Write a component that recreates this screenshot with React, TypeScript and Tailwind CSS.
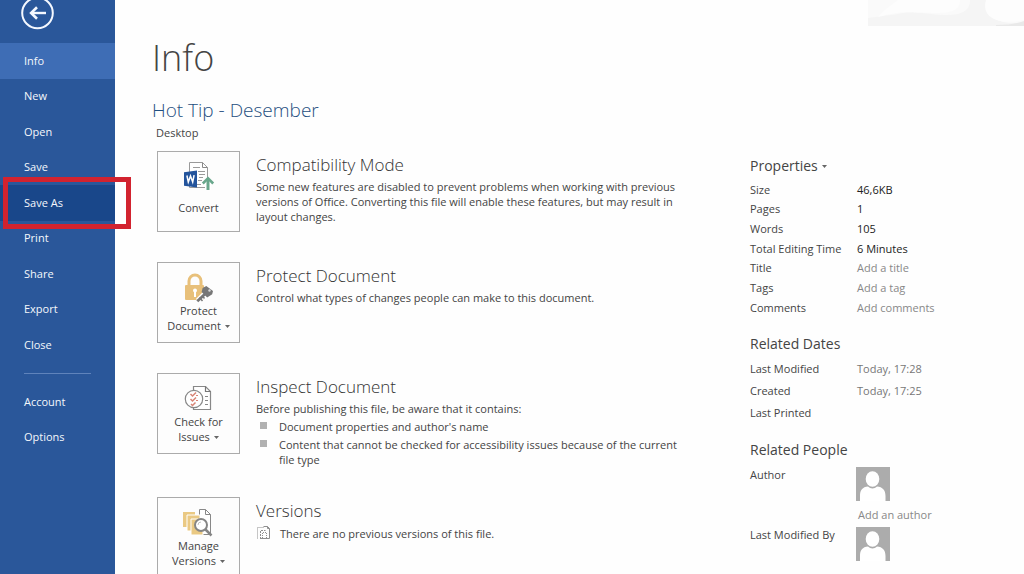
import type { ReactNode } from "react";

const primaryNav = ["Info", "New", "Open", "Save", "Save As", "Print", "Share", "Export", "Close"];
const secondaryNav = ["Account", "Options"];

const properties = [
  { label: "Size", value: "46,6KB", editable: false },
  { label: "Pages", value: "1", editable: false },
  { label: "Words", value: "105", editable: false },
  { label: "Total Editing Time", value: "6 Minutes", editable: false },
  { label: "Title", value: "Add a title", editable: true },
  { label: "Tags", value: "Add a tag", editable: true },
  { label: "Comments", value: "Add comments", editable: true },
];

const dates = [
  { label: "Last Modified", value: "Today, 17:28" },
  { label: "Created", value: "Today, 17:25" },
  { label: "Last Printed", value: "" },
];

function BackIcon() {
  return (
    <svg width="34" height="34" viewBox="0 0 34 34" fill="none" stroke="#f4f8ff" aria-hidden="true">
      <circle cx="17.5" cy="17" r="15.3" strokeWidth="2" />
      <path d="M26 17H11.5" strokeWidth="2.4" />
      <path d="M17 11.2 11.1 17l5.9 5.8" strokeWidth="2.6" />
    </svg>
  );
}

function ConvertIcon() {
  return (
    <svg width="32" height="32" viewBox="0 0 32 32" fill="none" aria-hidden="true">
      <path d="M6.5 2.5h13l5 5v20h-18z" fill="#fff" stroke="#9a9a9a" />
      <path d="M19.5 2.5v5h5" stroke="#888" />
      <path d="M10 7.5h7M15 11.5h7M16 14.5h6M16 17.5h4M15 20.5h4M9 24.5h9" stroke="#9a9a9a" />
      <path d="M1 12.2 14 10.5v17L1 25.8z" fill="#23549c" />
      <path d="m3.9 15.5 1.4 6.500 2.200-6 2.200 6 1.400-6.800" stroke="#fff" strokeWidth="1.500" />
      <path d="M25 30V19.500" stroke="#fff" strokeWidth="6" />
      <path d="M25 30V19" stroke="#69a78c" strokeWidth="3" />
      <path d="m19.800 23.500 5.200-5.200 5.200 5.200" stroke="#69a78c" strokeWidth="2.600" />
    </svg>
  );
}

function ProtectIcon() {
  return (
    <svg width="32" height="32" viewBox="0 0 32 32" fill="none" aria-hidden="true">
      <path d="M6 15V10a6 6 0 0 1 12 0v5" stroke="#e8c07a" strokeWidth="3" />
      <rect x="2" y="14" width="19" height="15" rx="1" fill="#e8c07a" />
      <circle cx="12" cy="19.500" r="2" fill="#fff" />
      <path d="M12 20v6" stroke="#fff" strokeWidth="2" />
      <path d="m15 30 8-8" stroke="#fff" strokeWidth="6" />
      <path d="m23.300 14.900 6.700 5-.8 3.300-5 3.300-5.600-5.600 1-4z" fill="#777" />
      <path d="m14.300 30.300 8.500-8" stroke="#777" strokeWidth="2.800" />
      <path d="m16.500 26.500 3 3.500M19 24.500l2.500 3" stroke="#777" strokeWidth="1.500" />
      <circle cx="26.500" cy="19.500" r="1.200" fill="#d9d9d9" />
    </svg>
  );
}

function InspectIcon() {
  return (
    <svg width="32" height="32" viewBox="0 0 32 32" fill="none" aria-hidden="true">
      <path d="M10.5 9V4.500h12l5 5v18h-17V25" fill="#fff" stroke="#888" strokeWidth="1.200" />
      <path d="M22.500 4.500v5h5" stroke="#777" strokeWidth="1.200" />
      <path d="M22 14.500h3M22 18.500h3M22 22.500h3" stroke="#888" />
      <circle cx="11" cy="17" r="8.700" fill="#fff" stroke="#888" strokeWidth="1.200" />
      <path d="m7.500 12 2 2 3.500-3.500M7.500 17l2 2 3.500-3.500M8 22l1.500 1.500 3-3" stroke="#d98576" strokeWidth="1.500" />
      <path d="M13 13.500h2M13 18.500h2" stroke="#d98576" />
    </svg>
  );
}

function VersionsIcon() {
  return (
    <svg width="32" height="32" viewBox="0 0 32 32" fill="none" aria-hidden="true">
      <path d="M16.500 3.500h6l5 5v20h-11z" fill="#fff" stroke="#888" />
      <path d="M22.500 3.500v5h5" stroke="#888" />
      <path d="M0 6h12v15H0z" fill="#eac983" />
      <path d="M4 9h13v16H4z" fill="#eac983" stroke="#fff" />
      <path d="M8 13h12v16H8z" fill="#eac983" stroke="#fff" />
      <circle cx="18" cy="19" r="6" fill="#fff" stroke="#858585" strokeWidth="2" />
      <path d="M15 19a3 3 0 0 1 3-3" stroke="#c0c0c0" />
      <path d="m22.500 23.500 6 6" stroke="#858585" strokeWidth="2.500" />
    </svg>
  );
}

function NoVersionsIcon() {
  return (
    <svg width="16" height="16" viewBox="0 0 16 16" fill="none" stroke="#8f8f8f" aria-hidden="true">
      <path d="M1.500 13.500v-11h7" strokeDasharray="1 1" />
      <path d="M4.500 14V5.500h5" strokeDasharray="2 1" />
      <path d="M7.500 1.500h4l2 2v10h-9" />
      <path d="M11.500 1.500v2h2" />
      <path d="M6.500 13V7.500h4V13" strokeDasharray="1 1" />
    </svg>
  );
}

function Avatar() {
  return (
    <svg width="34" height="34" viewBox="0 0 34 34" role="img" aria-label="Person">
      <path d="M0 0h34v34H0z" fill="#acacac" />
      <ellipse cx="16.500" cy="12" rx="6.800" ry="7.800" fill="#fff" />
      <path d="M4 34v-5c0-6 2.500-9 8-9.500 2.500 2.500 6.500 2.500 9 0 5.500.5 8.500 3.500 8.500 9.500v5z" fill="#fff" />
    </svg>
  );
}

function Caret() {
  return (
    <svg className="mb-px ml-1 inline-block align-middle" width="5" height="3" viewBox="0 0 5 3" aria-hidden="true">
      <path d="M0 0h5L2.500 3z" fill="#666" />
    </svg>
  );
}

function NavList({ items }: { items: string[] }) {
  return (
    <>
      {items.map((item) => (
        <li key={item} className="relative flex">
          <button
            type="button"
            aria-current={item === "Info" ? "page" : undefined}
            className={
              item === "Info"
                ? "flex-1 bg-[#3e6db5] pl-6 text-left"
                : item === "Save As"
                  ? "flex-1 bg-[#19478a] pl-6 text-left"
                  : "flex-1 pl-6 text-left"
            }
          >
            {item}
          </button>
          {item === "Save As" && (
            <span className="pointer-events-none absolute -inset-y-2 -right-4 left-[3px] z-10 border-5 border-[#d2232f]" />
          )}
        </li>
      ))}
    </>
  );
}

type SectionProps = {
  icon: ReactNode;
  lines: string[];
  menu?: boolean;
  title: string;
  children: ReactNode;
};

function Section({ icon, lines, menu = false, title, children }: SectionProps) {
  return (
    <section className="flex gap-4">
      <button
        type="button"
        className="flex h-[81px] w-[83px] shrink-0 flex-col items-center border border-[#ababab] bg-[#fdfdfd] pt-2 leading-[15px] font-medium text-[#444]"
      >
        {icon}
        <span className={menu ? "" : "pt-2"}>
          {lines.map((line, index) => (
            <span key={line} className="block whitespace-nowrap">
              {line}
              {menu && index === lines.length - 1 && <Caret />}
            </span>
          ))}
        </span>
      </button>
      <div className="max-w-[430px] leading-[15px]">
        <h3 className="text-[17px] leading-7 font-light text-[#333]">{title}</h3>
        {children}
      </div>
    </section>
  );
}

export default function App() {
  return (
    <div className="flex h-screen overflow-hidden bg-[#fefefe] font-['Open_Sans','Noto_Sans',sans-serif] text-[11px] text-[#444]">
      <nav aria-label="File" className="w-[115px] shrink-0 bg-[#2a579a] text-[#f4f7fc]">
        <div className="flex h-[43px] items-start pl-5">
          <button type="button" aria-label="Back" className="-mt-1">
            <BackIcon />
          </button>
        </div>
        <ul className="grid h-80 auto-rows-fr">
          <NavList items={primaryNav} />
        </ul>
        <hr className="mx-6 my-[10px] border-[#5f83bb]" />
        <ul className="grid h-[71px] auto-rows-fr">
          <NavList items={secondaryNav} />
        </ul>
      </nav>

      <main className="relative min-w-0 flex-1">
        <svg
          className="absolute top-0 right-0"
          width="156"
          height="27"
          viewBox="0 0 156 27"
          aria-hidden="true"
        >
          <path d="M0 0h156v26H0z" fill="#fafafa" />
          <path d="M30 14c20-5 40 4 60 0 10-3 12-8 12-14h18c-4 12 2 20 20 23h16v3H0V18z" fill="#f5f5f5" />
          <path d="M30 0h62c0 10-8 13-25 13S38 9 10 17C18 8 24 5 30 0zM118 0h38v20c-20 5-44 0-38-20z" fill="#fdfdfd" />
          <path d="M128 25c12 0 20-1 28-4v5h-28z" fill="#e9e9e9" />
        </svg>

        <h1 className="pt-8 pl-[37px] text-[36px] leading-[52px] font-light text-[#444]">Info</h1>
        <h2 className="pt-3 pl-[37px] text-[19px] leading-7 font-light text-[#1f4e80]">Hot Tip - Desember</h2>
        <p className="pl-[41px] leading-[18px]">Desktop</p>

        <div className="flex pt-[9px] pl-[42px]">
          <div className="flex min-w-0 flex-1 flex-col gap-[30px]">
            <Section icon={<ConvertIcon />} lines={["Convert"]} title="Compatibility Mode">
              <p>
                Some new features are disabled to prevent problems when working with previous versions of Office.
                Converting this file will enable these features, but may result in layout changes.
              </p>
            </Section>
            <Section icon={<ProtectIcon />} lines={["Protect", "Document"]} menu title="Protect Document">
              <p>Control what types of changes people can make to this document.</p>
            </Section>
            <Section icon={<InspectIcon />} lines={["Check for", "Issues"]} menu title="Inspect Document">
              <p>Before publishing this file, be aware that it contains:</p>
              <ul className="mt-[3px] flex flex-col gap-[3px]">
                {[
                  "Document properties and author's name",
                  "Content that cannot be checked for accessibility issues because of the current file type",
                ].map((text) => (
                  <li key={text} className="flex gap-3 pl-1">
                    <span className="mt-[3px] size-[7px] shrink-0 bg-[#b1b1b1]" />
                    <span>{text}</span>
                  </li>
                ))}
              </ul>
            </Section>
            <Section icon={<VersionsIcon />} lines={["Manage", "Versions"]} menu title="Versions">
              <p className="flex items-center gap-2">
                <NoVersionsIcon />
                There are no previous versions of this file.
              </p>
            </Section>
          </div>

          <aside className="w-[274px] shrink-0 pt-[5px]">
            <button type="button" className="block text-[14px] leading-5">
              Properties
              <Caret />
            </button>
            <dl className="mt-1 grid h-[138px] auto-rows-fr">
              {properties.map(({ label, value, editable }) => (
                <div key={label} className="flex items-center">
                  <dt className="w-[107px]">{label}</dt>
                  <dd className={editable ? "text-[#888]" : "text-[#222]"}>{value}</dd>
                </div>
              ))}
            </dl>

            <h3 className="mt-4 text-[14px] leading-5">Related Dates</h3>
            <dl className="mt-1 leading-[22px]">
              {dates.map(({ label, value }) => (
                <div key={label} className="flex">
                  <dt className="w-[107px]">{label}</dt>
                  <dd className="text-[#777]">{value}</dd>
                </div>
              ))}
            </dl>

            <h3 className="mt-4 text-[14px] leading-5">Related People</h3>
            <dl className="mt-[7px] leading-[15px]">
              <div className="flex">
                <dt className="w-[106px]">Author</dt>
                <dd>
                  <Avatar />
                  <button type="button" className="block h-[26px] pl-[2px] text-[#888]">
                    Add an author
                  </button>
                </dd>
              </div>
              <div className="flex">
                <dt className="w-[106px]">Last Modified By</dt>
                <dd>
                  <Avatar />
                </dd>
              </div>
            </dl>
          </aside>
        </div>
      </main>
    </div>
  );
}
